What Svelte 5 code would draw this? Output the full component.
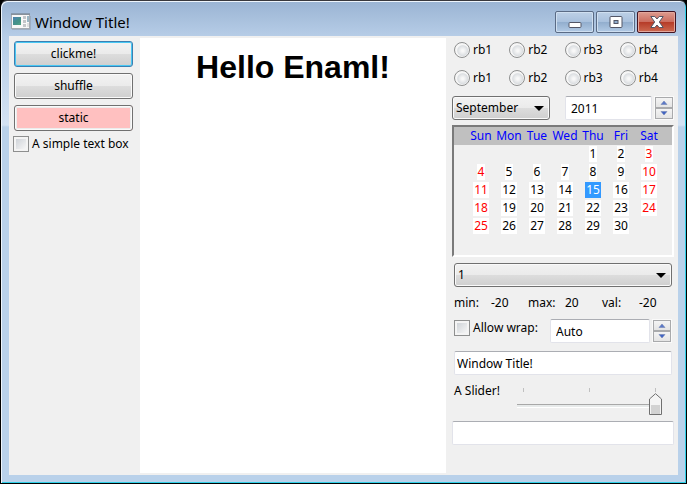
<script>
  const weekdays = ['Sun', 'Mon', 'Tue', 'Wed', 'Thu', 'Fri', 'Sat'];
  const weeks = [
    [0, 0, 0, 0, 1, 2, 3],
    [4, 5, 6, 7, 8, 9, 10],
    [11, 12, 13, 14, 15, 16, 17],
    [18, 19, 20, 21, 22, 23, 24],
    [25, 26, 27, 28, 29, 30, 0]
  ];
  const groups = ['first', 'second'];
  const options = ['rb1', 'rb2', 'rb3', 'rb4'];
  const stats = [['min:', '-20'], ['max:', '20'], ['val:', '-20']];
  let selected = $state(15);
</script>

{#snippet stepper(name)}
  <span class="stepper">
    <button aria-label="Increase {name}">
      <svg width="8" height="5" viewBox="0 0 8 5"><path d="M1 4.5 4 1l3 3.500z" fill="#5a78c8" stroke="#7484b4" stroke-width=".6" /></svg>
    </button>
    <button aria-label="Decrease {name}">
      <svg width="8" height="5" viewBox="0 0 8 5"><path d="M1 .5 4 4l3-3.500z" fill="#3f63c4" stroke="#7484b4" stroke-width=".6" /></svg>
    </button>
  </span>
{/snippet}

<div class="window">
  <header>
    <svg class="appicon" width="20" height="18" viewBox="0 0 20 18">
      <defs>
        <linearGradient id="pic" x1="0" y1="0" x2="1" y2="1">
          <stop offset="0" stop-color="#4a7fb0" />
          <stop offset="1" stop-color="#4fa37c" />
        </linearGradient>
      </defs>
      <rect x=".5" y="1.500" width="18" height="14" fill="#f8f8f8" stroke="#a5abb2" />
      <path d="M0 1h19" stroke="#6d7680" />
      <rect x="2" y="4" width="8" height="8" fill="url(#pic)" />
      <path d="M2 8q4-1 8-4v4q-4 4-8 4z" fill="#3f8f86" opacity=".6" />
      <path d="M12 3h3v3h-3zM12 7h3v3h-3zM12 11h3v3h-3z" fill="#c3c6c9" />
      <path d="M17 3v6" stroke="#3d7590" />
      <path d="M17 10v4" stroke="#c3c6c9" />
      <path d="M1 16.500h18.500V3" fill="none" stroke="#8c96a4" opacity=".5" />
    </svg>
    <h1>Window Title!</h1>
    <div class="controls">
      <button aria-label="Minimize">
        <svg width="14" height="14" viewBox="0 0 14 14"><rect x="1" y="7.500" width="12" height="5" rx="1" fill="#fff" stroke="#535666" /></svg>
      </button>
      <button aria-label="Maximize">
        <svg width="14" height="14" viewBox="0 0 14 14">
          <rect x="1" y="1.500" width="12" height="11" rx="1" fill="#fff" stroke="#535666" />
          <rect x="5" y="5.500" width="4" height="3" fill="#8fadce" stroke="#535666" />
        </svg>
      </button>
      <button class="close" aria-label="Close">
        <svg width="14" height="14" viewBox="0 0 14 14">
          <path d="M.8 1.500h4L7 4l2.200-2.500h4L9.300 7l3.900 5.500h-4L7 10l-2.200 2.500h-4L4.700 7z" fill="#fff" stroke="#535666" stroke-linejoin="round" />
        </svg>
      </button>
    </div>
  </header>

  <main>
    <section class="left">
      <button class="push focus">clickme!</button>
      <button class="push">shuffle</button>
      <button class="push static">static</button>
      <label class="check"><input type="checkbox" />A simple text box</label>
    </section>

    <section class="canvas"><h2>Hello Enaml!</h2></section>

    <section class="right">
      <div class="radios">
        {#each groups as group}
          {#each options as option}
            <label><input type="radio" name={group} value={option} />{option}</label>
          {/each}
        {/each}
      </div>

      <div class="row date">
        <span class="combo month">
          <select aria-label="Month"><option>September</option></select>
        </span>
        <span class="spin year"><input type="text" aria-label="Year" value="2011" />{@render stepper('year')}</span>
      </div>

      <div class="calendar">
        <table>
          <thead>
            <tr>{#each weekdays as day}<th>{day}</th>{/each}</tr>
          </thead>
          <tbody>
            {#each weeks as week}
              <tr>
                {#each week as day, i}
                  <td>
                    {#if day}
                      <button class:weekend={i === 0 || i === 6} class:selected={day === selected} onclick={() => (selected = day)}>{day}</button>
                    {/if}
                  </td>
                {/each}
              </tr>
            {/each}
          </tbody>
        </table>
      </div>

      <span class="combo inset">
        <select aria-label="Value"><option>1</option></select>
      </span>

      <div class="row stats inset">
        {#each stats as [name, value]}
          <span>{name}</span><span>{value}</span>
        {/each}
      </div>

      <div class="row inset wrap">
        <label class="check"><input type="checkbox" />Allow wrap:</label>
        <span class="spin auto"><input type="text" aria-label="Spin value" value="Auto" />{@render stepper('value')}</span>
      </div>

      <input class="field inset-field" type="text" aria-label="Title" value="Window Title!" />

      <div class="row inset sliderrow">
        <label for="slider">A Slider!</label>
        <div class="slider">
          <div class="ticks"><i></i><i></i><i></i></div>
          <input id="slider" type="range" min="0" max="100" value="100" />
        </div>
      </div>

      <input class="field" type="text" aria-label="Output" />
    </section>
  </main>
</div>

<style>
  :global(body) {
    margin: 0;
    background: #000;
  }
  .window, button, input, select {
    box-sizing: border-box;
    font: 12px/16px 'Noto Sans', Tahoma, sans-serif;
    color: #000;
  }
  button, input, select {
    margin: 0;
  }
  .window {
    display: flex;
    flex-direction: column;
    min-height: 100vh;
    padding: 0 7px 7px;
    border: 1px solid #000;
    border-top-color: #38383c;
    border-radius: 7px 7px 0 0;
    background: linear-gradient(#9ab4d3, #b7cde7 36px, #d3e2f3 124px, #b9d1ea 126px);
    box-shadow: inset 1px 1px #eef5fc, inset -1px -1px #2fd0e8;
  }
  header {
    display: flex;
    align-items: center;
    height: 35px;
    padding: 7px 3px 0 3px;
    box-sizing: border-box;
  }
  h1 {
    flex: 1;
    margin: 0 0 0 4px;
    font: 15px/20px 'Noto Sans', 'Segoe UI', sans-serif;
  }
  .controls {
    display: flex;
    gap: 2px;
  }
  .controls button {
    display: flex;
    align-items: center;
    justify-content: center;
    width: 39px;
    height: 22px;
    padding: 0;
    border: 1px solid #5a6b85;
    border-radius: 2px;
    background: linear-gradient(#bdd0e6, #a9c1dd 48%, #91adcd 50%, #b2cae5);
    box-shadow: inset 0 0 0 1px #cfdff0;
  }
  .controls .close {
    border-color: #431422;
    background: linear-gradient(#dd9b8f, #cc6e60 48%, #b53a27 50%, #cd6a51);
    box-shadow: inset 0 0 0 1px #e3a79c;
  }
  main {
    display: flex;
    flex: 1;
    margin: 0 1px 1px;
    background: #f0f0f0;
  }
  .left {
    display: flex;
    flex-direction: column;
    gap: 6px;
    flex: 0 0 131px;
    box-sizing: border-box;
    padding: 5px 7px 0 5px;
  }
  .push {
    height: 26px;
    padding: 0;
    border: 1px solid #707070;
    border-radius: 3px;
    background: linear-gradient(#f2f2f2, #ebebeb 49%, #dddddd 50%, #cfcfcf);
    box-shadow: inset 0 0 0 1px #fafafa;
  }
  .focus {
    border-color: #3c7fb1;
    box-shadow: inset 0 0 0 1px #48c8f4;
  }
  .static {
    background: #ffc0c0;
    box-shadow: inset 0 0 0 1px #fafafa, inset 0 0 0 2px #ececec;
  }
  .check {
    display: flex;
    align-items: center;
    gap: 3px;
    white-space: nowrap;
  }
  .left .check {
    margin: -1px;
  }
  input[type='checkbox'] {
    appearance: none;
    flex: none;
    width: 16px;
    height: 16px;
    border: 1px solid #8e8f8f;
    background: linear-gradient(135deg, #cfd3d8, #f6f6f6) content-box, #f4f4f4;
    padding: 2px;
    box-shadow: inset 0 0 0 1px #f4f4f4;
  }
  .canvas {
    flex: 1;
    min-width: 0;
    margin: 2px 0;
    background: #fff;
  }
  h2 {
    margin: 10px 0 0;
    font: bold 32px/38px 'Liberation Sans', Arial, sans-serif;
    text-align: center;
  }
  .right {
    display: flex;
    flex-direction: column;
    gap: 6px;
    flex: 0 0 232px;
    min-width: 0;
    box-sizing: border-box;
    padding: 0 4px 0 6px;
  }
  .radios {
    display: grid;
    grid-template-columns: repeat(4, 1fr);
    grid-auto-rows: 28px;
    margin: 0 -1px -2px 2px;
  }
  .radios label {
    display: flex;
    align-items: center;
    gap: 3px;
  }
  input[type='radio'] {
    appearance: none;
    width: 16px;
    height: 16px;
    border: 1px solid #8e8f8f;
    border-radius: 50%;
    background: radial-gradient(circle at 55% 55%, #f8f8f8 1px, #dcdfe2 5px, #f6f6f6 6px);
  }
  .row {
    display: flex;
    justify-content: space-between;
  }
  .inset {
    margin: 0 2px;
  }
  .combo {
    position: relative;
    display: flex;
  }
  .combo select {
    appearance: none;
    width: 100%;
    height: 24px;
    padding: 0 20px 0 3px;
    border: 1px solid #707070;
    border-radius: 3px;
    background: linear-gradient(#f2f2f2, #ebebeb 49%, #dddddd 50%, #cfcfcf);
    box-shadow: inset 0 0 0 1px #fafafa;
  }
  .combo::after {
    content: '';
    position: absolute;
    right: 6px;
    top: 10px;
    border: 5px solid transparent;
    border-top-color: #000;
    border-bottom: 0;
    pointer-events: none;
  }
  .month {
    flex: 0 0 98px;
  }
  .spin {
    display: flex;
    gap: 2px;
    min-width: 0;
  }
  .year {
    flex: 0 0 109px;
  }
  .auto {
    flex: 0 0 122px;
  }
  .spin input, .field {
    flex: 1;
    min-width: 0;
    height: 24px;
    padding: 0 5px;
    border: 1px solid #e2e3ea;
    border-top-color: #abadb3;
    border-radius: 2px;
    background: #fff;
  }
  .field {
    flex: none;
    padding: 0 2px;
  }
  .inset-field {
    margin: 2px 2px 0;
  }
  .stepper {
    display: flex;
    flex-direction: column;
    flex: none;
    justify-content: space-between;
    width: 20px;
    height: 24px;
    padding: 1px;
    box-sizing: border-box;
    background: #fafafa;
  }
  .stepper button {
    display: flex;
    align-items: center;
    justify-content: center;
    height: 11px;
    padding: 0;
    border: 1px solid #a9aaac;
    background: linear-gradient(#f4f4f4, #e4e4e4);
  }
  .calendar {
    height: 132px;
    box-sizing: border-box;
    margin-top: -1px;
    padding: 0 9px 0 13px;
    border: 2px solid;
    border-color: #7a7a7a #fff #fff #7a7a7a;
    background: linear-gradient(#c0c0c0 18px, #f0f0f0 18px);
  }
  table {
    width: 100%;
    border-collapse: collapse;
    table-layout: fixed;
  }
  th, td {
    height: 18px;
    padding: 0;
    text-align: center;
    line-height: 16px;
  }
  th {
    color: #0000ff;
    font-weight: normal;
  }
  td button {
    display: block;
    height: 16px;
    margin: 0 auto;
    padding: 0 1px;
    border: 0;
    background: #fff;
  }
  td .weekend {
    color: #ff0000;
  }
  td .selected {
    background: #3399ff;
    color: #fff;
  }
  .stats {
    display: grid;
    grid-template-columns: 37px 37px 37px 37px 37px 1fr;
    line-height: 20px;
  }
  .wrap .check {
    height: 17px;
  }
  .sliderrow {
    height: 34px;
  }
  .sliderrow label {
    line-height: 20px;
  }
  .slider {
    flex: 0 0 155px;
    padding: 7px 10px 0 0;
    box-sizing: border-box;
  }
  .ticks {
    display: flex;
    justify-content: space-between;
    height: 4px;
    margin: 0 6px;
  }
  .ticks i {
    width: 1px;
    background: #c0c0c0;
  }
  input[type='range'] {
    appearance: none;
    display: block;
    width: 100%;
    height: 24px;
    background: linear-gradient(#a8a8a8 0 1px, #e7eaea 1px 3px, #fff 3px) 0 12px / 100% 4px no-repeat;
  }
  input[type='range']::-webkit-slider-thumb {
    appearance: none;
    width: 13px;
    height: 22px;
    background: url("data:image/svg+xml,%3Csvg xmlns='http://www.w3.org/2000/svg' width='13' height='22'%3E%3Cpath d='M.5 21.500V6L6.500.7 12.500 6v15.500z' fill='%23f4f4f4' stroke='%23707070'/%3E%3Cpath d='M2 12h9v9H2z' fill='%23d2d2d2'/%3E%3C/svg%3E");
  }
</style>
